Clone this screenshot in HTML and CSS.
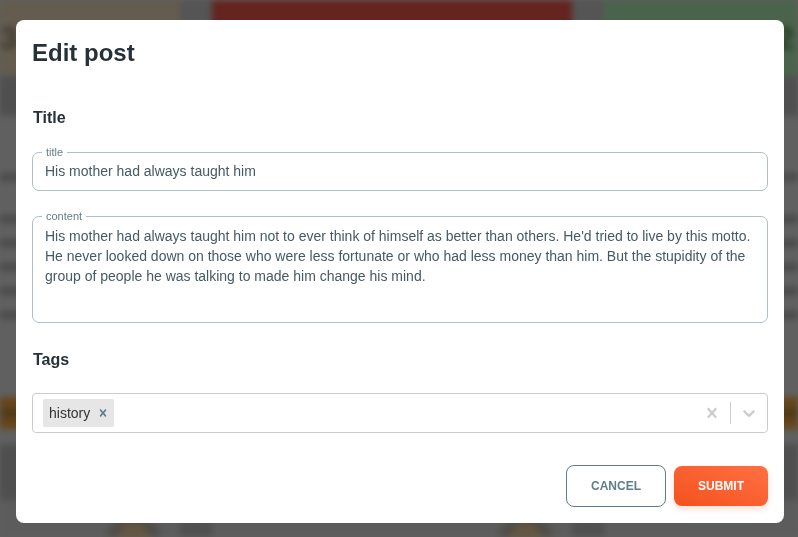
FILE: index.html
```html
<!DOCTYPE html>
<html lang="en">
<head>
<meta charset="utf-8">
<meta name="viewport" content="width=device-width, initial-scale=1">
<title>Edit post</title>
<link rel="stylesheet" href="styles.css">
</head>
<body>
<div class="page" aria-hidden="true">
  <div class="columns cards">
    <div class="card sand">3</div>
    <div class="card red"></div>
    <div class="card green">2</div>
  </div>
  <div class="band"></div>
  <div class="posts">
    <div class="line"></div>
    <div class="line"></div>
    <div class="line"></div>
    <div class="line"></div>
    <div class="line"></div>
    <div class="line"></div>
    <div class="bar"></div>
  </div>
  <div class="band tall"></div>
  <div class="columns people">
    <div class="person"></div>
    <div class="person"></div>
    <div class="person blank"></div>
  </div>
</div>

<div class="overlay">
  <form class="dialog" role="dialog" aria-labelledby="dialog-title">
    <h2 class="dialog-title" id="dialog-title">Edit post</h2>
    <div class="dialog-body">
      <h3 class="section-title">Title</h3>
      <fieldset class="field">
        <legend><label for="title">title</label></legend>
        <input id="title" type="text" value="His mother had always taught him">
      </fieldset>
      <fieldset class="field">
        <legend><label for="content">content</label></legend>
        <textarea id="content">His mother had always taught him not to ever think of himself as better than others. He'd tried to live by this motto. He never looked down on those who were less fortunate or who had less money than him. But the stupidity of the group of people he was talking to made him change his mind.</textarea>
      </fieldset>
      <h3 class="section-title tags-title"><label for="tags">Tags</label></h3>
      <div class="select">
        <div class="tag">
          <span>history</span>
          <button type="button" class="tag-remove" aria-label="Remove history">
            <svg viewBox="0 0 20 20" width="14" height="14"><path d="M14.348 14.849c-0.469 0.469-1.229 0.469-1.697 0l-2.651-3.030-2.651 3.029c-0.469 0.469-1.229 0.469-1.697 0-0.469-0.469-0.469-1.229 0-1.697l2.758-3.15-2.759-3.152c-0.469-0.469-0.469-1.228 0-1.697s1.228-0.469 1.697 0l2.652 3.031 2.651-3.031c0.469-0.469 1.228-0.469 1.697 0s0.469 1.229 0 1.697l-2.758 3.152 2.758 3.15c0.469 0.469 0.469 1.229 0 1.698z"/></svg>
          </button>
        </div>
        <input class="select-input" id="tags" type="text" role="combobox" aria-expanded="false">
        <button type="button" class="indicator" aria-label="Clear tags">
          <svg viewBox="0 0 20 20" width="20" height="20"><path d="M14.348 14.849c-0.469 0.469-1.229 0.469-1.697 0l-2.651-3.030-2.651 3.029c-0.469 0.469-1.229 0.469-1.697 0-0.469-0.469-0.469-1.229 0-1.697l2.758-3.15-2.759-3.152c-0.469-0.469-0.469-1.228 0-1.697s1.228-0.469 1.697 0l2.652 3.031 2.651-3.031c0.469-0.469 1.228-0.469 1.697 0s0.469 1.229 0 1.697l-2.758 3.152 2.758 3.15c0.469 0.469 0.469 1.229 0 1.698z"/></svg>
        </button>
        <span class="separator"></span>
        <button type="button" class="indicator" aria-label="Open tags">
          <svg viewBox="0 0 20 20" width="20" height="20"><path d="M4.516 7.548c0.436-0.446 1.043-0.481 1.576 0l3.908 3.747 3.908-3.747c0.533-0.481 1.141-0.446 1.574 0 0.436 0.445 0.408 1.197 0 1.615-0.406 0.418-4.695 4.502-4.695 4.502-0.217 0.223-0.502 0.335-0.787 0.335s-0.57-0.112-0.789-0.335c0 0-4.287-4.084-4.695-4.502s-0.436-1.17 0-1.615z"/></svg>
        </button>
      </div>
    </div>
    <div class="dialog-footer">
      <button type="button" class="button outlined">CANCEL</button>
      <button type="submit" class="button filled">SUBMIT</button>
    </div>
  </form>
</div>
</body>
</html>
```

FILE: styles.css
```css
* {
  box-sizing: border-box;
}

body {
  margin: 0;
  background: #606060;
  font-family: "Liberation Sans", Arial, sans-serif;
  color: #263238;
}

/* Page behind the dialog */
.page {
  position: fixed;
  inset: 0;
  overflow: hidden;
  background: #606060;
  filter: blur(3px);
}

.columns {
  display: grid;
  grid-template-columns: repeat(3, 360px);
  justify-content: center;
  gap: 32px;
  padding-right: 14px;
}

.cards {
  height: 76px;
  background: #555555;
}

.card {
  display: flex;
  align-items: center;
  font-size: 32px;
  font-weight: 700;
}

.sand {
  padding-left: 180px;
  background: #645c4f;
  color: #3c382f;
}

.red {
  background: #642420;
}

.green {
  padding-left: 172px;
  background: #4a644c;
  color: #243626;
}

.band {
  height: 40px;
  background: #4f4f4f;
}

.tall {
  height: 56px;
}

.posts {
  display: flex;
  flex-direction: column;
  gap: 16px;
  height: 328px;
  padding-top: 57px;
}

.line {
  height: 8px;
  background: #4a4a4a;
}

.line:first-child {
  margin-bottom: 18px;
}

.bar {
  height: 32px;
  margin-top: 62px;
  background: linear-gradient(#664618 25%, #4c3818 50%, #664618 75%);
}

.people {
  height: 37px;
  background: #505050;
}

.person {
  background: radial-gradient(circle at 314px 40px, #655640 14px, #4c4a44 20px, #5c5c5c 32px);
}

.blank {
  background: #5c5c5c;
}

/* Dialog */
.overlay {
  position: relative;
  display: flex;
  align-items: flex-start;
  min-height: 100vh;
  padding: 20px 14px 14px 16px;
}

.dialog {
  width: 100%;
  background: #ffffff;
  border-radius: 8px;
}

.dialog-title {
  margin: 0;
  padding: 16px;
  font-size: 24px;
  line-height: 34px;
}

.dialog-body {
  padding: 20px 16px 16px;
}

.section-title {
  margin: 0 0 17px;
  padding-left: 1px;
  font-size: 16px;
  line-height: 24px;
}

.tags-title {
  margin: 25px 0 21px;
}

.field {
  min-width: 0;
  margin: 0 0 20px;
  padding: 0 12px;
  border: 1px solid #b0bec5;
  border-radius: 7px;
}

.field legend {
  margin-left: -3px;
  padding: 0 4px;
  font-size: 11px;
  line-height: 10px;
  color: #607d8b;
}

.field input,
.field textarea {
  display: block;
  width: 100%;
  margin: 0;
  padding: 0;
  border: 0;
  outline: 0;
  background: transparent;
  font: 14px/20px "Liberation Sans", Arial, sans-serif;
  color: #455a64;
}

.field input {
  height: 33px;
  padding-bottom: 5px;
}

.field textarea {
  height: 101px;
  padding-top: 5px;
  resize: none;
}

.select {
  display: flex;
  align-items: center;
  min-height: 40px;
  padding-left: 10px;
  border: 1px solid #cccccc;
  border-radius: 4px;
}

.tag {
  display: flex;
  align-items: center;
  height: 28px;
  padding-left: 6px;
  border-radius: 2px;
  background: #e6e6e6;
  font-size: 14px;
  color: #333333;
}

.tag-remove,
.indicator {
  display: flex;
  margin: 0;
  border: 0;
  background: transparent;
}

.tag-remove {
  margin-left: 2px;
  padding: 4px;
  fill: #607d8b;
}

.indicator {
  padding: 8px;
  fill: #cccccc;
}

.select-input {
  flex: 1;
  min-width: 0;
  border: 0;
  outline: 0;
  background: transparent;
  font: 14px/20px "Liberation Sans", Arial, sans-serif;
}

.separator {
  width: 1px;
  height: 22px;
  background: #cccccc;
}

.dialog-footer {
  display: flex;
  align-items: center;
  justify-content: flex-end;
  gap: 8px;
  padding: 16px;
}

.button {
  padding: 12px 24px;
  border: 0;
  border-radius: 8px;
  font: 700 12px/16px "Liberation Sans", Arial, sans-serif;
}

.outlined {
  border: 1px solid #607d8b;
  background: transparent;
  color: #607d8b;
}

.filled {
  background: linear-gradient(to top right, #f4511e, #ff7043);
  box-shadow: 0 3px 6px rgba(255, 87, 34, 0.2);
  color: #ffffff;
}
```
